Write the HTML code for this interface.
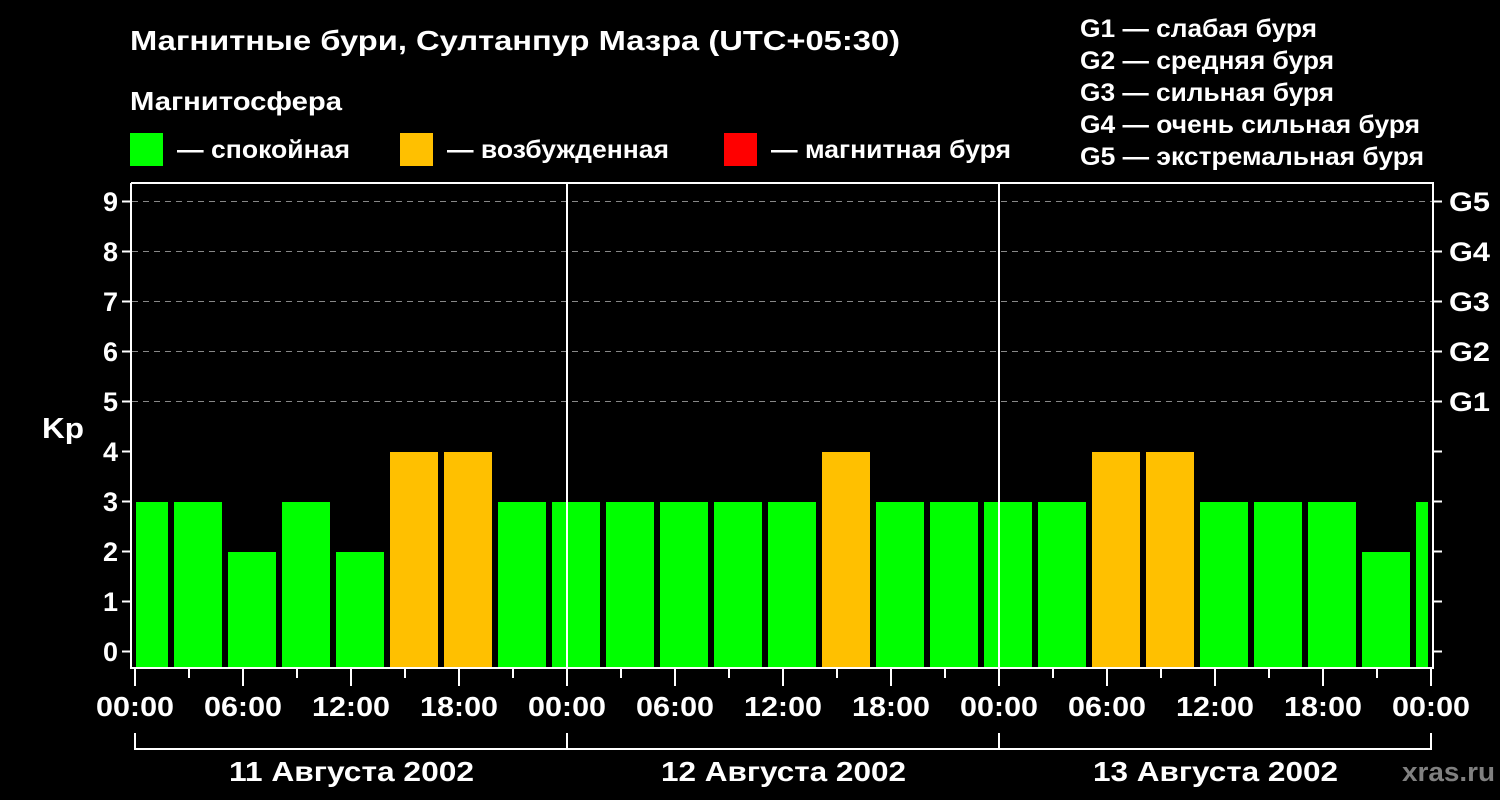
<!DOCTYPE html>
<html><head><meta charset="utf-8"><style>
body{margin:0;background:#000;width:1500px;height:800px;overflow:hidden}
svg{display:block}
text{font-family:"Liberation Sans",sans-serif;font-weight:bold;fill:#fff}
</style></head><body>
<svg width="1500" height="800" viewBox="0 0 1500 800">
<text x="130" y="50" font-size="28" textLength="770" lengthAdjust="spacingAndGlyphs">Магнитные бури, Султанпур Мазра (UTC+05:30)</text>
<text x="130" y="110" font-size="26" textLength="212" lengthAdjust="spacingAndGlyphs">Магнитосфера</text>
<rect x="130" y="133" width="33" height="33" fill="#00ff00"/>
<text x="177" y="158" font-size="25" textLength="173" lengthAdjust="spacingAndGlyphs">— спокойная</text>
<rect x="400" y="133" width="33" height="33" fill="#ffc000"/>
<text x="447" y="158" font-size="25" textLength="222" lengthAdjust="spacingAndGlyphs">— возбужденная</text>
<rect x="724" y="133" width="33" height="33" fill="#ff0000"/>
<text x="771" y="158" font-size="25" textLength="240" lengthAdjust="spacingAndGlyphs">— магнитная буря</text>
<g font-size="25">
<text x="1080" y="37" textLength="237" lengthAdjust="spacingAndGlyphs">G1 — слабая буря</text>
<text x="1080" y="69" textLength="254" lengthAdjust="spacingAndGlyphs">G2 — средняя буря</text>
<text x="1080" y="101" textLength="254" lengthAdjust="spacingAndGlyphs">G3 — сильная буря</text>
<text x="1080" y="133" textLength="340" lengthAdjust="spacingAndGlyphs">G4 — очень сильная буря</text>
<text x="1080" y="165" textLength="344" lengthAdjust="spacingAndGlyphs">G5 — экстремальная буря</text>
</g>
<g stroke="#888" stroke-width="1" stroke-dasharray="6,5">
<line x1="132" x2="1432" y1="201.5" y2="201.5"/>
<line x1="132" x2="1432" y1="251.5" y2="251.5"/>
<line x1="132" x2="1432" y1="301.5" y2="301.5"/>
<line x1="132" x2="1432" y1="351.5" y2="351.5"/>
<line x1="132" x2="1432" y1="401.5" y2="401.5"/>
</g>
<g>
<rect x="136" y="502" width="32" height="165" fill="#00ff00"/>
<rect x="174" y="502" width="48" height="165" fill="#00ff00"/>
<rect x="228" y="552" width="48" height="115" fill="#00ff00"/>
<rect x="282" y="502" width="48" height="165" fill="#00ff00"/>
<rect x="336" y="552" width="48" height="115" fill="#00ff00"/>
<rect x="390" y="452" width="48" height="215" fill="#ffc000"/>
<rect x="444" y="452" width="48" height="215" fill="#ffc000"/>
<rect x="498" y="502" width="48" height="165" fill="#00ff00"/>
<rect x="552" y="502" width="48" height="165" fill="#00ff00"/>
<rect x="606" y="502" width="48" height="165" fill="#00ff00"/>
<rect x="660" y="502" width="48" height="165" fill="#00ff00"/>
<rect x="714" y="502" width="48" height="165" fill="#00ff00"/>
<rect x="768" y="502" width="48" height="165" fill="#00ff00"/>
<rect x="822" y="452" width="48" height="215" fill="#ffc000"/>
<rect x="876" y="502" width="48" height="165" fill="#00ff00"/>
<rect x="930" y="502" width="48" height="165" fill="#00ff00"/>
<rect x="984" y="502" width="48" height="165" fill="#00ff00"/>
<rect x="1038" y="502" width="48" height="165" fill="#00ff00"/>
<rect x="1092" y="452" width="48" height="215" fill="#ffc000"/>
<rect x="1146" y="452" width="48" height="215" fill="#ffc000"/>
<rect x="1200" y="502" width="48" height="165" fill="#00ff00"/>
<rect x="1254" y="502" width="48" height="165" fill="#00ff00"/>
<rect x="1308" y="502" width="48" height="165" fill="#00ff00"/>
<rect x="1362" y="552" width="48" height="115" fill="#00ff00"/>
<rect x="1416" y="502" width="12" height="165" fill="#00ff00"/>
</g>
<g stroke="#fff" stroke-width="2" fill="none">
<path d="M131 183V668H1433V183H131"/>
<line x1="567" x2="567" y1="183" y2="668"/>
<line x1="999" x2="999" y1="183" y2="668"/>
<path d="M135 733V749H1431V733M567 733V749M999 733V749"/>
<path d="M122 201.5H131M122 251.5H131M122 301.5H131M122 351.5H131M122 401.5H131M122 451.5H131M122 501.5H131M122 551.5H131M122 601.5H131M122 651.5H131"/>
<path d="M1433 201.5H1442M1433 251.5H1442M1433 301.5H1442M1433 351.5H1442M1433 401.5H1442M1433 451.5H1442M1433 501.5H1442M1433 551.5H1442M1433 601.5H1442M1433 651.5H1442"/>
<path d="M135 668V686M189 668V678M243 668V686M297 668V678M351 668V686M405 668V678M459 668V686M513 668V678M567 668V686M621 668V678M675 668V686M729 668V678M783 668V686M837 668V678M891 668V686M945 668V678M999 668V686M1053 668V678M1107 668V686M1161 668V678M1215 668V686M1269 668V678M1323 668V686M1377 668V678M1431 668V686"/>
</g>
<g font-size="27" text-anchor="end">
<text x="118" y="211">9</text><text x="118" y="261">8</text><text x="118" y="311">7</text><text x="118" y="361">6</text><text x="118" y="411">5</text><text x="118" y="461">4</text><text x="118" y="511">3</text><text x="118" y="561">2</text><text x="118" y="611">1</text><text x="118" y="661">0</text>
</g>
<g font-size="27">
<text x="1449" y="211" textLength="41" lengthAdjust="spacingAndGlyphs">G5</text><text x="1449" y="261" textLength="41" lengthAdjust="spacingAndGlyphs">G4</text><text x="1449" y="311" textLength="41" lengthAdjust="spacingAndGlyphs">G3</text><text x="1449" y="361" textLength="41" lengthAdjust="spacingAndGlyphs">G2</text><text x="1449" y="411" textLength="41" lengthAdjust="spacingAndGlyphs">G1</text>
</g>
<text x="42" y="438" font-size="29" textLength="42" lengthAdjust="spacingAndGlyphs">Kp</text>
<g font-size="28">
<text x="96" y="716" textLength="78" lengthAdjust="spacingAndGlyphs">00:00</text>
<text x="204" y="716" textLength="78" lengthAdjust="spacingAndGlyphs">06:00</text>
<text x="312" y="716" textLength="78" lengthAdjust="spacingAndGlyphs">12:00</text>
<text x="420" y="716" textLength="78" lengthAdjust="spacingAndGlyphs">18:00</text>
<text x="528" y="716" textLength="78" lengthAdjust="spacingAndGlyphs">00:00</text>
<text x="636" y="716" textLength="78" lengthAdjust="spacingAndGlyphs">06:00</text>
<text x="744" y="716" textLength="78" lengthAdjust="spacingAndGlyphs">12:00</text>
<text x="852" y="716" textLength="78" lengthAdjust="spacingAndGlyphs">18:00</text>
<text x="960" y="716" textLength="78" lengthAdjust="spacingAndGlyphs">00:00</text>
<text x="1068" y="716" textLength="78" lengthAdjust="spacingAndGlyphs">06:00</text>
<text x="1176" y="716" textLength="78" lengthAdjust="spacingAndGlyphs">12:00</text>
<text x="1284" y="716" textLength="78" lengthAdjust="spacingAndGlyphs">18:00</text>
<text x="1392" y="716" textLength="78" lengthAdjust="spacingAndGlyphs">00:00</text>
</g>
<g font-size="28">
<text x="229" y="781" textLength="245" lengthAdjust="spacingAndGlyphs">11 Августа 2002</text>
<text x="661" y="781" textLength="245" lengthAdjust="spacingAndGlyphs">12 Августа 2002</text>
<text x="1093" y="781" textLength="245" lengthAdjust="spacingAndGlyphs">13 Августа 2002</text>
</g>
<text x="1402" y="781" font-size="27" textLength="93" lengthAdjust="spacingAndGlyphs" style="fill:#808080">xras.ru</text>
</svg>
</body></html>
